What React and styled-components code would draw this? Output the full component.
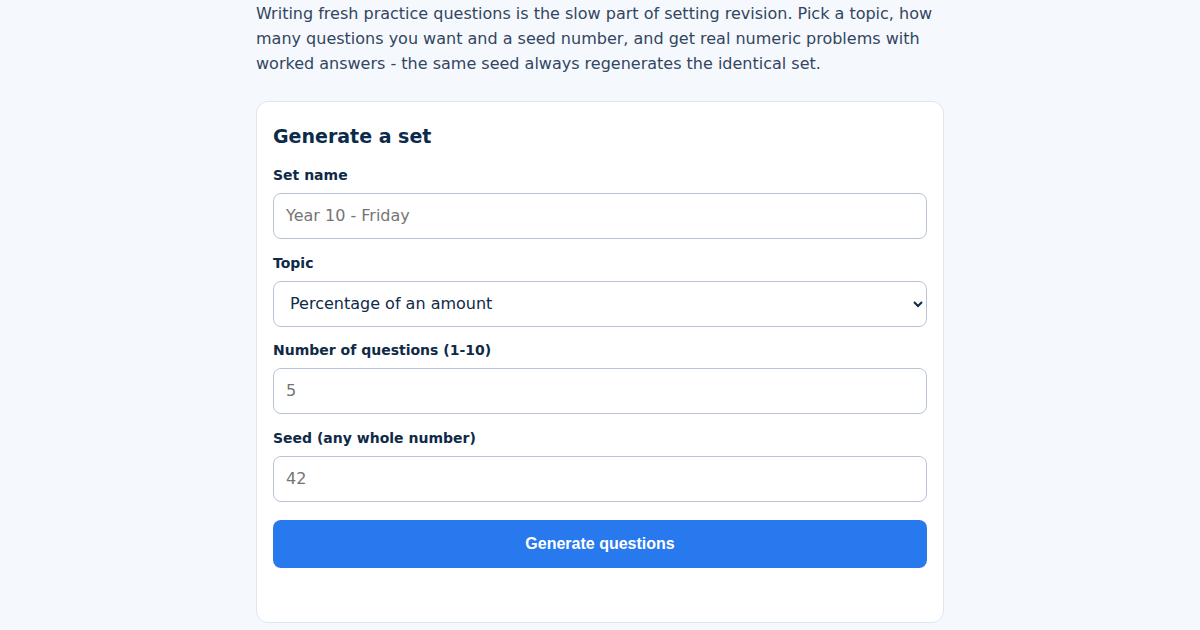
import React from 'react'
import styled, { createGlobalStyle } from 'styled-components'

const GlobalStyle = createGlobalStyle`
    html, body {
        margin: 0;
        padding: 0;
        background: #f5f9fe;
        font-family: 'DejaVu Sans', sans-serif;
    }
`

const topics = [
    'Percentage of an amount',
    'Percentage change',
    'Ratio sharing',
    'Area of a rectangle',
]

function App() {
    const [name, setName] = React.useState('')
    const [topic, setTopic] = React.useState(topics[0])
    const [count, setCount] = React.useState('')
    const [seed, setSeed] = React.useState('')

    return (
        <Page>
            <GlobalStyle />
            <Intro>
                Writing fresh practice questions is the slow part of setting revision. Pick a topic, how
                many questions you want and a seed number, and get real numeric problems with
                worked answers - the same seed always regenerates the identical set.
            </Intro>

            <Card onSubmit={(e) => e.preventDefault()}>
                <h2>Generate a set</h2>

                <Field>
                    <label htmlFor="set-name">Set name</label>
                    <Input id="set-name" type="text" placeholder="Year 10 - Friday"
                        value={name} onChange={(e) => setName(e.target.value)} />
                </Field>

                <Field>
                    <label htmlFor="topic">Topic</label>
                    <Select id="topic" value={topic} onChange={(e) => setTopic(e.target.value)}>
                        {topics.map((t) => <option key={t}>{t}</option>)}
                    </Select>
                </Field>

                <Field>
                    <label htmlFor="count">Number of questions (1-10)</label>
                    <Input id="count" type="number" placeholder="5"
                        value={count} onChange={(e) => setCount(e.target.value)} />
                </Field>

                <Field>
                    <label htmlFor="seed">Seed (any whole number)</label>
                    <Input id="seed" type="number" placeholder="42"
                        value={seed} onChange={(e) => setSeed(e.target.value)} />
                </Field>

                <Button type="submit">Generate questions</Button>
                <Status />
            </Card>
        </Page>
    )
}

const Page = styled.main`
    width: 688px;
    margin: 0 auto;
    padding-top: 1px;
`

const Intro = styled.p`
    margin: 0 0 25px;
    font-size: 16px;
    line-height: 25px;
    color: #334560;
`

const Card = styled.form`
    background: #fff;
    border: 1px solid #dde5ef;
    border-radius: 12px;
    padding: 20px 16px;

    h2 {
        margin: 0 0 15px;
        font-size: 19px;
        line-height: 28px;
        font-weight: 700;
        color: #0c2b4b;
    }
`

const Field = styled.div`
    display: flex;
    flex-direction: column;
    margin-bottom: 13.67px;

    label {
        font-size: 14px;
        line-height: 20px;
        font-weight: 700;
        color: #0f2a47;
        margin-bottom: 8px;
    }
`

const Input = styled.input`
    box-sizing: border-box;
    height: 46px;
    width: 100%;
    padding: 0 12px 1px;
    border: 1px solid #b9c4d7;
    border-radius: 8px;
    background: #fff;
    font-family: 'DejaVu Sans', sans-serif;
    font-size: 16px;
    color: #0f2a47;
    outline: none;
    -moz-appearance: textfield;

    &::placeholder {
        color: #757575;
    }

    &::-webkit-outer-spin-button,
    &::-webkit-inner-spin-button {
        -webkit-appearance: none;
        margin: 0;
    }
`

const Select = styled.select`
    box-sizing: border-box;
    height: 46px;
    width: 100%;
    padding: 0 8px 1px 12px;
    border: 1px solid #b9c4d7;
    border-radius: 8px;
    background: #fff;
    font-family: 'DejaVu Sans', sans-serif;
    font-size: 16px;
    color: #0f2a47;
    outline: none;
`

const Button = styled.button`
    display: block;
    width: 100%;
    height: 48px;
    margin-top: 18px;
    border: none;
    border-radius: 8px;
    background: #2979ee;
    color: #fff;
    font-family: 'Liberation Sans', Arial, sans-serif;
    font-size: 16px;
    font-weight: 700;
    cursor: pointer;
`

const Status = styled.div`
    min-height: 34px;
`

export default App
